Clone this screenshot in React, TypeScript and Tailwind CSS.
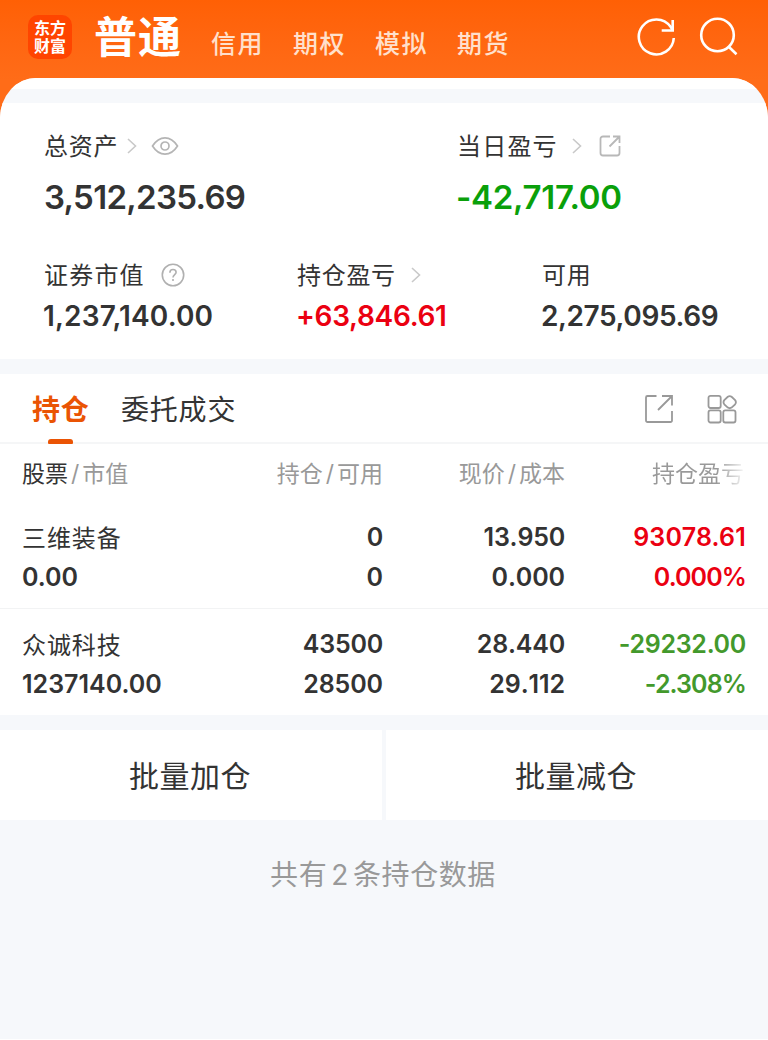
import clsx from 'clsx';

type Tone = 'up' | 'down';

interface Holding {
  name: string;
  marketValue: string;
  amount: string;
  available: string;
  price: string;
  cost: string;
  profit: string;
  ratio: string;
  tone: Tone;
}

const accountTabs = ['信用', '期权', '模拟', '期货'];

const holdings: Holding[] = [
  {
    name: '三维装备',
    marketValue: '0.00',
    amount: '0',
    available: '0',
    price: '13.950',
    cost: '0.000',
    profit: '93078.61',
    ratio: '0.000%',
    tone: 'up',
  },
  {
    name: '众诚科技',
    marketValue: '1237140.00',
    amount: '43500',
    available: '28500',
    price: '28.440',
    cost: '29.112',
    profit: '-29232.00',
    ratio: '-2.308%',
    tone: 'down',
  },
];

const toneClass: Record<Tone, string> = {
  up: 'text-[#eb0011]',
  down: 'text-[#43992c]',
};

const columns = 'grid grid-cols-[199px_162px_182px_181px] px-[22px]';

function ChevronIcon() {
  return (
    <svg width="10" height="16" viewBox="0 0 10 16" fill="none" stroke="#c9c9c9" strokeWidth="1.6">
      <path d="M1 1l7.5 7L1 15" />
    </svg>
  );
}

function EyeIcon() {
  return (
    <svg width="28" height="20" viewBox="0 0 28 20" fill="none" stroke="#b5b5b5" strokeWidth="1.7">
      <path d="M1.5 10C5 4.500 9.200 1.800 14 1.800S23 4.500 26.500 10C23 15.500 18.800 18.200 14 18.200S5 15.500 1.500 10z" />
      <circle cx="14" cy="10" r="4" />
    </svg>
  );
}

function HelpIcon() {
  return (
    <svg width="24" height="24" viewBox="0 0 24 24" fill="none" stroke="#b0b0b0" strokeWidth="1.6">
      <circle cx="12" cy="12" r="10.700" />
      <path d="M8.900 9.700c0-2 1.300-3.200 3.100-3.200s3.100 1.100 3.100 2.800c0 2.200-3.100 2.500-3.100 5.200" />
      <path d="M12 16v2" />
    </svg>
  );
}

function ShareIcon() {
  return (
    <svg width="22" height="22" viewBox="0 0 22 22" fill="none" stroke="#b8b8b8" strokeWidth="1.8">
      <path d="M11 1.500H4A2.500 2.500 0 0 0 1.500 4v14A2.500 2.500 0 0 0 4 20.500h14a2.500 2.500 0 0 0 2.500-2.500v-7" />
      <path d="M14 1.500h6.500V8M20.500 1.500L10.500 11.500" />
    </svg>
  );
}

function ExportIcon() {
  return (
    <svg width="30" height="30" viewBox="0 0 30 30" fill="none" stroke="#999" strokeWidth="1.8">
      <path d="M12.500 2H3.500A1.500 1.500 0 0 0 2 3.500v23A1.500 1.500 0 0 0 3.500 28h23a1.500 1.500 0 0 0 1.500-1.500v-9.500" />
      <path d="M18 2h10v9.500M28 2L14 16" />
    </svg>
  );
}

function WidgetsIcon() {
  return (
    <svg width="30" height="30" viewBox="0 0 30 30" fill="none" stroke="#999" strokeWidth="1.8">
      <rect x="1.500" y="1.800" width="12.200" height="12.200" rx="2" />
      <rect x="1.500" y="16.300" width="12.200" height="12.200" rx="2" />
      <rect x="16.300" y="16.300" width="12.200" height="12.200" rx="2" />
      <path d="M20.800 2.800q1.900-1.300 3.800 0l3.500 3.300q1.600 2.100 0 4.200l-3.500 3.300q-1.900 1.300-3.800 0l-3.500-3.300q-1.600-2.100 0-4.200z" />
    </svg>
  );
}

function Header() {
  return (
    <header className="flex h-[78px] items-start pl-7 text-white">
      <div className="mt-[15px] flex h-11 w-11 flex-col items-center justify-center rounded-[10px] bg-[#ff4500] text-[16px] leading-[18px] font-bold">
        <span>东方</span>
        <span>财富</span>
      </div>
      <h1 className="mt-[7px] ml-[22px] w-[117px] text-[43px] leading-[60px] font-bold tracking-[1px]">
        普通
      </h1>
      <nav className="mt-6 flex text-[25px] leading-10 font-medium tracking-[1.500px] text-[#ffe0cc]">
        {accountTabs.map((tab) => (
          <span key={tab} className="w-[82px]">
            {tab}
          </span>
        ))}
      </nav>
      <div className="mt-4 ml-[98px] flex gap-[22px]">
        <svg width="40" height="42" viewBox="0 0 40 42" fill="none" stroke="white" strokeWidth="2.600">
          <path d="M36.800 22a17.500 17.500 0 1 1-3.200-11.200L36 14.500" />
          <path d="M35.700 4v10.500H24.700" />
        </svg>
        <svg width="40" height="42" viewBox="0 0 40 42" fill="none" stroke="white" strokeWidth="2.600">
          <circle cx="18.500" cy="19" r="16.300" />
          <path d="M29.500 30.500l8 7.700" />
        </svg>
      </div>
    </header>
  );
}

function Summary() {
  return (
    <section className="h-[256px] bg-white pt-[23px] pl-11 whitespace-nowrap text-[#333]">
      <div className="flex">
        <div className="w-[413px]">
          <div className="flex h-10 items-center text-[24px] tracking-[0.800px]">
            <span className="pt-0.5">总资产</span>
            <span className="ml-[9px]">
              <ChevronIcon />
            </span>
            <span className="ml-[14px]">
              <EyeIcon />
            </span>
          </div>
          <div className="mt-[11px] text-[33px] leading-10 font-semibold tracking-[-0.700px]">
            3,512,235.69
          </div>
        </div>
        <div>
          <div className="flex h-10 items-center text-[24px] tracking-[1.200px]">
            <span className="pt-0.5">当日盈亏</span>
            <span className="ml-[14px]">
              <ChevronIcon />
            </span>
            <span className="ml-[17px]">
              <ShareIcon />
            </span>
          </div>
          <div className="mt-[11px] -ml-px text-[33px] leading-10 font-semibold tracking-[-0.300px] text-[#0aa00a]">
            -42,717.00
          </div>
        </div>
      </div>
      <div className="mt-[38px] flex">
        <div className="w-[253px]">
          <div className="flex h-10 items-center text-[24px] tracking-[1.200px]">
            <span className="pt-0.5">证券市值</span>
            <span className="ml-4">
              <HelpIcon />
            </span>
          </div>
          <div className="mt-px -ml-px text-[28px] leading-10 font-semibold tracking-[0.150px]">
            1,237,140.00
          </div>
        </div>
        <div className="w-[245px]">
          <div className="flex h-10 items-center text-[24px] tracking-[0.700px]">
            <span className="pt-0.5">持仓盈亏</span>
            <span className="ml-[15px]">
              <ChevronIcon />
            </span>
          </div>
          <div className="mt-px -ml-px text-[28px] leading-10 font-semibold tracking-[-0.300px] text-[#eb0011]">
            +63,846.61
          </div>
        </div>
        <div>
          <div className="flex h-10 items-center text-[24px] tracking-[0.800px]">
            <span className="pt-0.5">可用</span>
          </div>
          <div className="mt-px -ml-px text-[28px] leading-10 font-semibold tracking-[-0.400px]">
            2,275,095.69
          </div>
        </div>
      </div>
    </section>
  );
}

function HoldingTabs() {
  return (
    <div className="flex h-[70px] items-start border-b-2 border-[#f5f6f7] bg-white pl-8 text-[28px] tracking-[0.800px]">
      <div className="flex w-[89px] flex-col">
        <span className="h-[65px] leading-[72px] font-bold text-[#ea5404]">持仓</span>
        <span className="ml-4 h-[5px] w-[25px] rounded-t-[3px] rounded-b-[1px] bg-[#ea5404]" />
      </div>
      <span className="leading-[72px] text-[#333]">委托成交</span>
      <div className="mt-5 mr-[31px] ml-auto flex gap-[33px]">
        <ExportIcon />
        <WidgetsIcon />
      </div>
    </div>
  );
}

function HoldingRow({ item, className }: { item: Holding; className: string }) {
  const cells = [
    [item.amount, item.available],
    [item.price, item.cost],
  ];

  return (
    <div className={clsx(columns, 'text-[25px] leading-10 font-semibold text-[#333]', className)}>
      <div>
        <p className="h-10 text-[24px] leading-[43px] font-normal tracking-[0.900px]">{item.name}</p>
        <p className="leading-[41px]">{item.marketValue}</p>
      </div>
      {cells.map(([top, bottom], i) => (
        <div key={i} className="text-right [font-kerning:none]">
          <p className="tracking-[-0.200px]">{top}</p>
          <p className="leading-[41px] tracking-[-0.100px]">{bottom}</p>
        </div>
      ))}
      <div className={clsx('text-right', toneClass[item.tone])}>
        <p className={item.tone === 'down' ? 'tracking-[-0.300px]' : 'tracking-[0.200px]'}>{item.profit}</p>
        <p className="leading-[41px] tracking-[-0.900px]">{item.ratio}</p>
      </div>
    </div>
  );
}

function Holdings() {
  return (
    <section className="bg-white whitespace-nowrap">
      <HoldingTabs />
      <div className={clsx(columns, 'h-[60px] text-right text-[23px] leading-[60px] text-[#999]')}>
        <span className="text-left">
          <span className="text-[#333]">股票</span>
          <span className="mx-[3px]">/</span>市值
        </span>
        <span>
          持仓<span className="mx-[3px]">/</span>可用
        </span>
        <span>
          现价<span className="mx-[3px]">/</span>成本
        </span>
        <span className="pr-0.5">
          <span className="bg-linear-to-r from-[#999] from-70% to-[#f4f4f4] bg-clip-text text-transparent">
            持仓盈亏
          </span>
        </span>
      </div>
      <HoldingRow item={holdings[0]} className="h-[105px] border-b border-[#f2f3f4] pt-[13px]" />
      <HoldingRow item={holdings[1]} className="h-[106px] pt-[15px]" />
    </section>
  );
}

export default function App() {
  return (
    <main
      lang="zh-CN"
      className="h-[1040px] w-[768px] overflow-hidden bg-linear-to-b from-[#ff6005] to-[#ff6c18] to-[80px] font-[Inter,'Noto_Sans_CJK_SC',sans-serif]"
    >
      <Header />
      <div className="h-[961px] overflow-hidden [border-radius:36px_36px_0_0/40px_40px_0_0] bg-[#f6f8fb]">
        <div className="mb-[14px] h-[11px] bg-white" />
        <Summary />
        <div className="h-[15px]" />
        <Holdings />
        <div className="mt-[15px] flex h-[90px] gap-1 text-[30px] leading-[92px] tracking-[0.500px] text-[#333]">
          <button className="h-[90px] w-[382px] bg-white pr-0.5">批量加仓</button>
          <button className="h-[90px] w-[382px] bg-white pr-0.5">批量减仓</button>
        </div>
        <p className="mt-[35px] pr-0.5 text-center text-[28px] leading-10 tracking-[0.600px] text-[#999]">
          共有<span className="mx-1">2</span>条持仓数据
        </p>
      </div>
      <div className="h-px bg-white" />
    </main>
  );
}
